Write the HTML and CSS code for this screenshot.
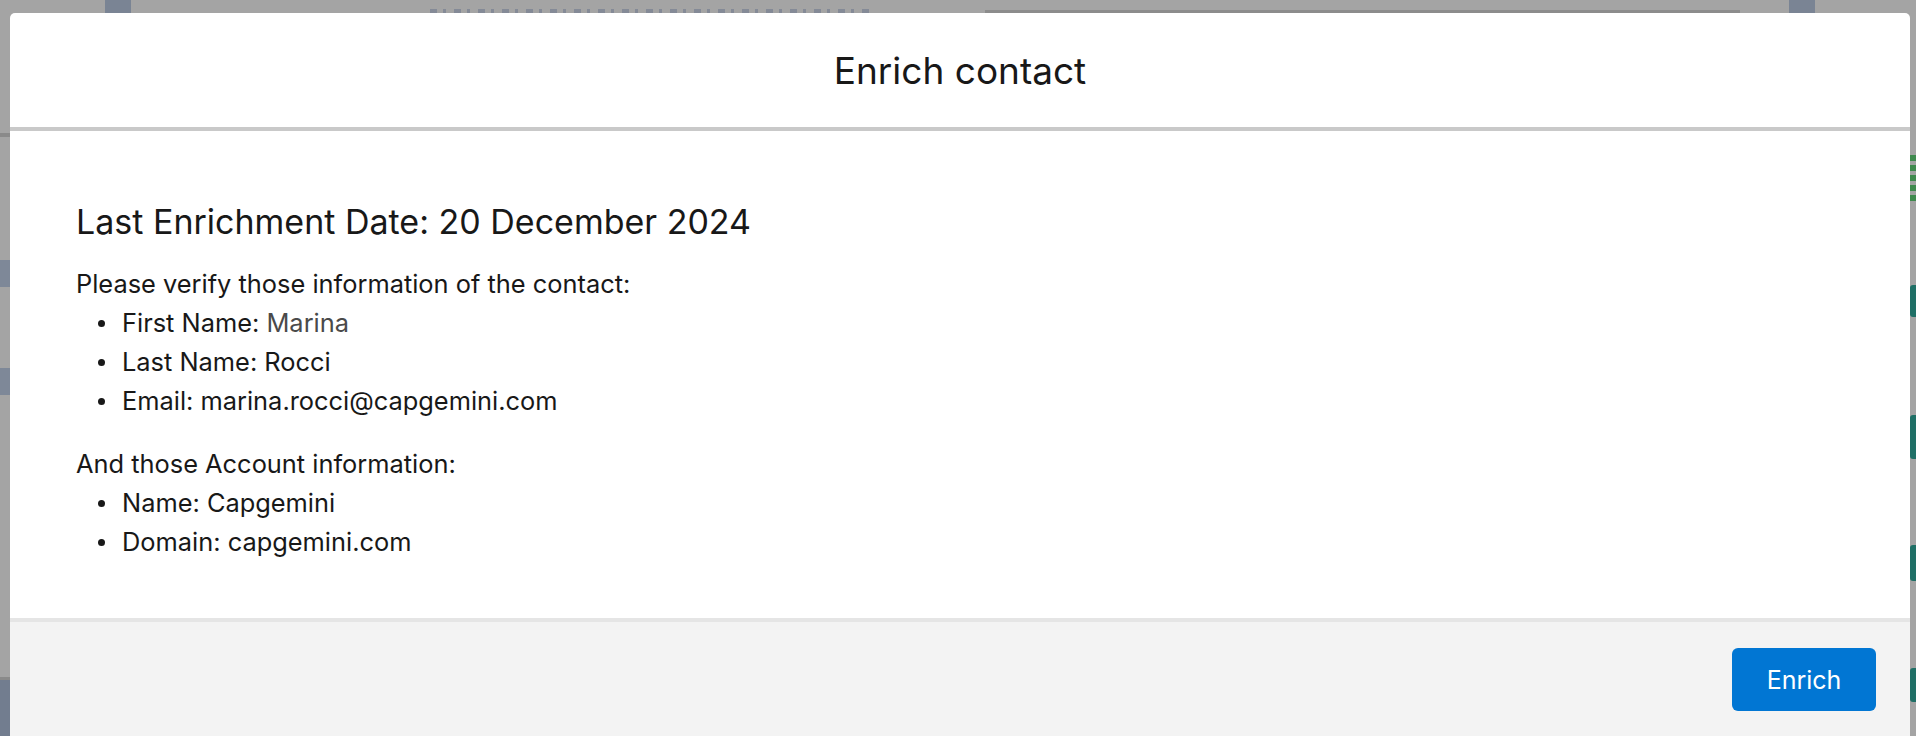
FILE: index.html
```html
<!DOCTYPE html>
<html lang="en">
<head>
<meta charset="utf-8">
<title>Enrich contact</title>
<link rel="stylesheet" href="styles.css">
</head>
<body>
<div class="backdrop" aria-hidden="true">
  <span class="bd-strip bd-strip-a"></span>
  <span class="bd-strip bd-strip-b"></span>
  <span class="bd-line"></span>
  <span class="bd-link"></span>
  <span class="bd-left bd-left-1"></span>
  <span class="bd-left bd-left-2"></span>
  <span class="bd-left bd-left-3"></span>
  <span class="bd-left bd-left-4"></span>
  <span class="bd-right bd-right-g"></span>
  <span class="bd-right bd-right-1"></span>
  <span class="bd-right bd-right-2"></span>
  <span class="bd-right bd-right-3"></span>
  <span class="bd-right bd-right-4"></span>
</div>

<section class="modal" role="dialog" aria-labelledby="modal-title">
  <header class="modal-header">
    <h1 id="modal-title" class="modal-title">Enrich contact</h1>
  </header>
  <div class="modal-body">
    <h2 class="enrich-date">Last Enrichment Date: 20 December 2024</h2>
    <p class="intro">Please verify those information of the contact:</p>
    <ul class="info-list">
      <li>First Name:&nbsp;<span class="muted">Marina</span></li>
      <li>Last Name: Rocci</li>
      <li>Email: marina.rocci@capgemini.com</li>
    </ul>
    <p class="intro">And those Account information:</p>
    <ul class="info-list">
      <li>Name: Capgemini</li>
      <li>Domain: capgemini.com</li>
    </ul>
  </div>
  <footer class="modal-footer">
    <button class="btn-brand" type="button">Enrich</button>
  </footer>
</section>
</body>
</html>
```
FILE: styles.css
```css
html, body {
  margin: 0;
  padding: 0;
}

body {
  width: 1916px;
  height: 736px;
  overflow: hidden;
  background: #a4a4a4;
  font-family: Inter, "Noto Sans", "Liberation Sans", sans-serif;
  color: #181818;
  position: relative;
  padding: 13px 6px 0 10px;
  box-sizing: border-box;
}

/* ---------- dimmed page behind the modal ---------- */
.backdrop {
  position: absolute;
  inset: 0;
  z-index: 0;
}
.backdrop span {
  position: absolute;
  display: block;
}
.bd-strip {
  top: 0;
  height: 13px;
  background: #7a8494;
}
.bd-strip-a { left: 105px; width: 26px; }
.bd-strip-b { left: 1789px; width: 26px; }
.bd-line {
  left: 985px;
  top: 10px;
  width: 755px;
  height: 3px;
  background: #8c8c8c;
}
.bd-link {
  left: 430px;
  top: 9px;
  width: 440px;
  height: 4px;
  background: repeating-linear-gradient(90deg, #5d6a86 0 7px, transparent 7px 13px, #5d6a86 13px 16px, transparent 16px 24px);
  opacity: .45;
}
.bd-left {
  left: 0;
  width: 10px;
}
.bd-left-1 { top: 133px; height: 4px; background: #8a8a8a; }
.bd-left-2 { top: 260px; height: 27px; background: #7e8898; }
.bd-left-3 { top: 368px; height: 27px; background: #7e8898; }
.bd-left-4 { top: 677px; height: 59px; background: #727d8f; border-top: 3px solid #8a8a8a; }
.bd-right {
  left: 1910px;
  width: 6px;
}
.bd-right-g { top: 155px; height: 48px; background: repeating-linear-gradient(180deg, #3f8a4e 0 6px, #a4a4a4 6px 10px); }
.bd-right-1 { top: 285px; height: 32px; background: #1f6f66; border-radius: 3px 0 0 3px; }
.bd-right-2 { top: 415px; height: 44px; background: #1f6f66; border-radius: 3px 0 0 3px; }
.bd-right-3 { top: 545px; height: 36px; background: #1f6f66; border-radius: 3px 0 0 3px; }
.bd-right-4 { top: 668px; height: 34px; background: #1f6f66; border-radius: 3px 0 0 3px; }

/* ---------- modal ---------- */
.modal {
  position: relative;
  z-index: 1;
  width: 1900px;
  background: #ffffff;
  border-radius: 5px 5px 0 0;
  display: flex;
  flex-direction: column;
}

.modal-header {
  height: 114px;
  border-bottom: 4px solid #c9c9c9;
  display: flex;
  align-items: center;
  justify-content: center;
}

.modal-title {
  margin: 0;
  font-size: 37px;
  font-weight: 400;
  line-height: 1.2;
  color: #181818;
  padding-top: 2px;
}

.modal-body {
  height: 487px;
  box-sizing: border-box;
  padding: 71px 66px 0;
}

.enrich-date {
  margin: 0 0 22px;
  font-size: 34px;
  font-weight: 400;
  line-height: 40px;
}

.intro {
  margin: 0;
  font-size: 25.4px;
  line-height: 39px;
}

.info-list {
  list-style: none;
  margin: 0 0 24px;
  padding: 0;
  font-size: 25.4px;
  line-height: 39px;
}

.info-list li {
  display: flex;
  align-items: center;
}

.info-list li::before {
  content: "";
  width: 7px;
  height: 7px;
  border-radius: 50%;
  background: #181818;
  margin: 2px 17px 0 22px;
  flex: none;
}

.muted {
  color: #4a4a4a;
}

.modal-footer {
  border-top: 4px solid #e5e5e5;
  background: #f3f3f3;
  padding: 26px 34px 40px;
  display: flex;
  justify-content: flex-end;
}

.btn-brand {
  width: 144px;
  height: 63px;
  border: none;
  border-radius: 6px;
  background: #0176d3;
  color: #ffffff;
  font-family: Inter, "Noto Sans", "Liberation Sans", sans-serif;
  font-size: 25px;
  font-weight: 400;
  padding: 0;
}
```
